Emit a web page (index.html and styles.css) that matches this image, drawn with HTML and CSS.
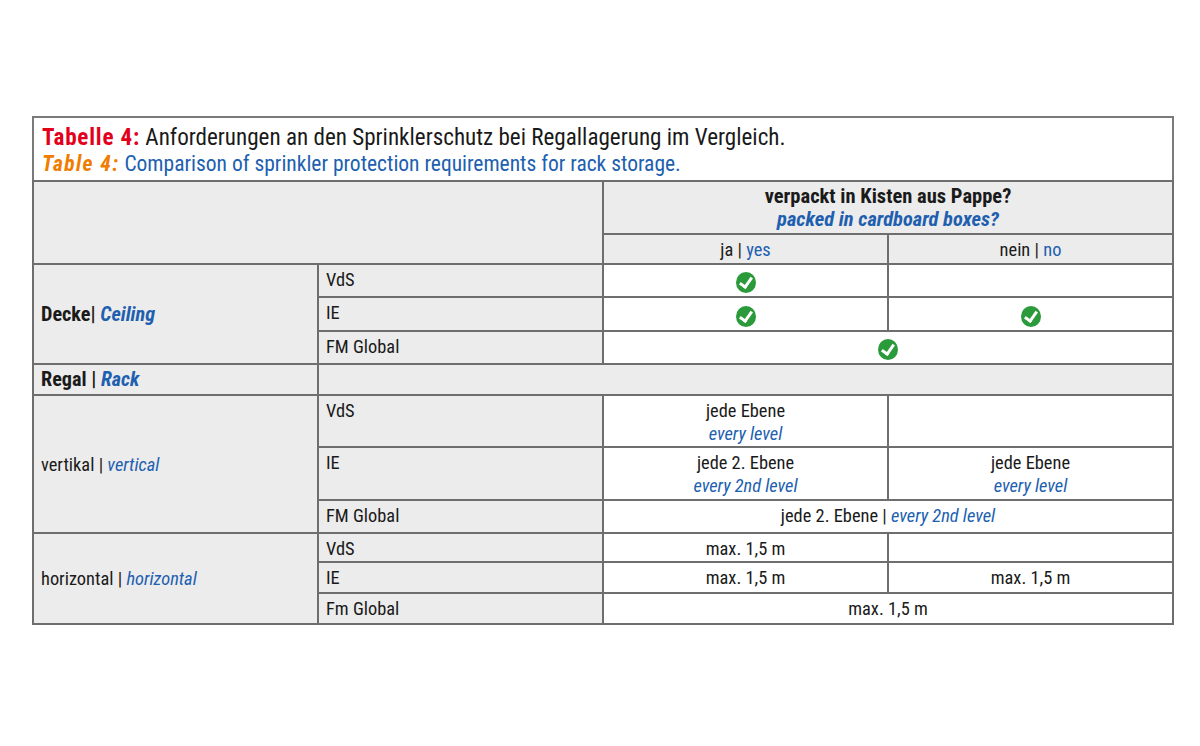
FILE: index.html
```html
<!DOCTYPE html>
<html lang="de">
<head>
<meta charset="utf-8">
<link rel="stylesheet" href="styles.css">
</head>
<body>
<div class="frame">
  <div class="caption">
    <div class="cap-de"><span class="lab-de">Tabelle 4:</span> Anforderungen an den Sprinklerschutz bei Regallagerung im Vergleich.</div>
    <div class="cap-en"><span class="lab-en">Table 4:</span> Comparison of sprinkler protection requirements for rack storage.</div>
  </div>
  <table class="grid">
    <colgroup><col class="c"><col class="c"><col class="c"><col class="c"></colgroup>
    <tr class="h1">
      <td class="lab" colspan="2" rowspan="2"></td>
      <td class="lab head" colspan="2"><b>verpackt in Kisten aus Pappe?</b><br><b class="en">packed in cardboard boxes?</b></td>
    </tr>
    <tr class="h2">
      <td class="lab center">ja <span class="bar">|</span> <span class="en2">yes</span></td>
      <td class="lab center">nein <span class="bar">|</span> <span class="en2">no</span></td>
    </tr>
    <tr class="r33">
      <td class="lab mid big" rowspan="3"><b>Decke<span class="bar">|</span> <i class="en">Ceiling</i></b></td>
      <td class="lab sub">VdS</td>
      <td class="val icon"><span class="ok"></span></td>
      <td class="val"></td>
    </tr>
    <tr class="r34">
      <td class="lab sub">IE</td>
      <td class="val icon"><span class="ok"></span></td>
      <td class="val icon"><span class="ok"></span></td>
    </tr>
    <tr class="r33">
      <td class="lab sub">FM Global</td>
      <td class="val icon" colspan="2"><span class="ok"></span></td>
    </tr>
    <tr class="rk">
      <td class="lab mid big"><b>Regal <span class="bar">|</span> <i class="en">Rack</i></b></td>
      <td class="lab" colspan="3"></td>
    </tr>
    <tr class="r52">
      <td class="lab mid" rowspan="3">vertikal <span class="bar">|</span> <i class="en2">vertical</i></td>
      <td class="lab sub">VdS</td>
      <td class="val">jede Ebene<br><i class="en2">every level</i></td>
      <td class="val"></td>
    </tr>
    <tr class="r53">
      <td class="lab sub">IE</td>
      <td class="val">jede 2. Ebene<br><i class="en2">every 2nd level</i></td>
      <td class="val">jede Ebene<br><i class="en2">every level</i></td>
    </tr>
    <tr class="r32">
      <td class="lab sub">FM Global</td>
      <td class="val" colspan="2">jede 2. Ebene <span class="bar">|</span> <i class="en2">every 2nd level</i></td>
    </tr>
    <tr class="r30">
      <td class="lab mid" rowspan="3">horizontal <span class="bar">|</span> <i class="en2">horizontal</i></td>
      <td class="lab sub">VdS</td>
      <td class="val">max. 1,5 m</td>
      <td class="val"></td>
    </tr>
    <tr class="r31">
      <td class="lab sub">IE</td>
      <td class="val">max. 1,5 m</td>
      <td class="val">max. 1,5 m</td>
    </tr>
    <tr class="r31">
      <td class="lab sub">Fm Global</td>
      <td class="val" colspan="2">max. 1,5 m</td>
    </tr>
  </table>
</div>
</body>
</html>
```

FILE: styles.css
```css
html, body {
  margin: 0;
  padding: 0;
  background: #ffffff;
}
body {
  font-family: "Liberation Sans Narrow", "Roboto Condensed", "Roboto", "Liberation Sans", sans-serif;
  color: #1a1a1a;
}
.frame {
  margin: 116px 0 0 32px;
  width: 1138px;
  border: 2px solid #7a7a7a;
  border-bottom: none;
}
.caption {
  height: 62px;
  padding: 6px 0 0 8px;
  box-sizing: border-box;
}
.cap-de {
  font-size: 23.1px;
  line-height: 27px;
  color: #1a1a1a;
}
.lab-de {
  color: #e3001b;
  font-weight: bold;
  letter-spacing: 0.8px;
}
.cap-en {
  font-size: 21.5px;
  line-height: 26px;
  color: #2060b0;
}
.lab-en {
  color: #f07d00;
  font-weight: bold;
  font-style: italic;
  letter-spacing: 1.4px;
}
.grid {
  border-collapse: collapse;
  table-layout: fixed;
  width: calc(100% + 4px);
  margin: 0 -2px;
  font-size: 18.4px;
}
.grid col.c { width: 25%; }
.grid td {
  border: 2px solid #6e6e6e;
  padding: 0;
  vertical-align: top;
  line-height: 23px;
}
.grid td.lab { background: #ececec; }
.grid td.val { background: #ffffff; text-align: center; padding-top: 3px; }
.grid td.sub { padding: 3px 0 0 7px; }
.grid td.mid { vertical-align: middle; padding-left: 7px; }
.grid td.big { font-size: 20.2px; }
.grid td.icon { vertical-align: middle; padding: 0; }
.grid td.center { text-align: center; vertical-align: middle; }
.grid td.head { text-align: center; vertical-align: middle; font-size: 20.5px; line-height: 23px; }
.en { color: #1f5fb0; font-style: italic; }
.en2 { color: #2060b0; font-style: italic; }
.center .en2 { font-style: normal; }
.bar { color: #2a2010; }
tr.h1 td { height: 51px; }
tr.h2 td { height: 28px; }
tr.r33 td { height: 28px; }
tr.r34 td { height: 29px; }
tr.rk td { height: 29px; }
tr.r52 td { height: 47px; }
tr.r53 td { height: 48px; }
tr.r32 td { height: 28px; }
tr.r30 td { height: 24px; }
tr.r31 td { height: 26px; }
.ok {
  display: inline-block;
  width: 20px;
  height: 21px;
  border-radius: 50%;
  background: #2b9a3a;
  position: relative;
  vertical-align: middle;
  margin-top: 4px;
}
.ok::after {
  content: "";
  position: absolute;
  left: 6px;
  top: 3px;
  width: 5px;
  height: 10px;
  border-right: 3px solid #fff;
  border-bottom: 3px solid #fff;
  transform: rotate(35deg);
}
```
